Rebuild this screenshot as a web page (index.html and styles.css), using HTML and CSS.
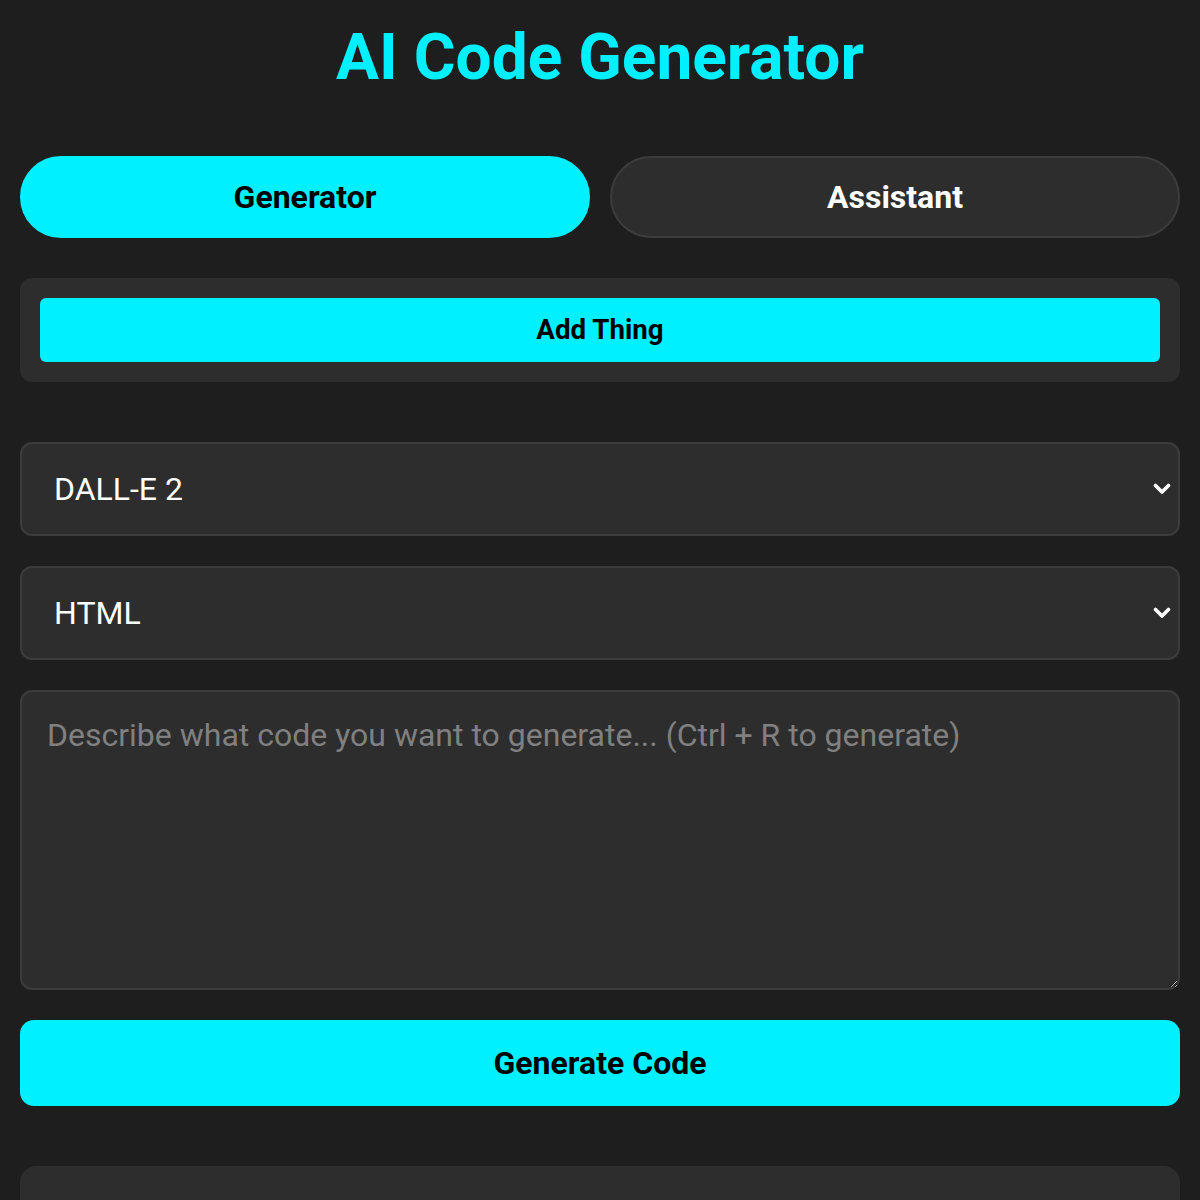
FILE: index.html
```html
<!DOCTYPE html>
<html lang="en">
<head>
<meta charset="utf-8">
<title>AI Code Generator</title>
<link rel="stylesheet" href="styles.css">
</head>
<body>
<main class="app">
  <h1 class="title">AI Code Generator</h1>
  <div class="tabs">
    <button class="tab tab-active">Generator</button>
    <button class="tab">Assistant</button>
  </div>
  <section class="panel things">
    <button class="add-btn">Add Thing</button>
  </section>
  <div class="select-wrap">
    <select class="select">
      <option>DALL-E 2</option>
    </select>
    <svg class="chevron" viewBox="0 0 18 12" width="18" height="12"><path d="M2.5 2.5 L9 9 L15.5 2.5" fill="none" stroke="#fff" stroke-width="3.6" stroke-linecap="round" stroke-linejoin="round"/></svg>
  </div>
  <div class="select-wrap">
    <select class="select">
      <option>HTML</option>
    </select>
    <svg class="chevron" viewBox="0 0 18 12" width="18" height="12"><path d="M2.5 2.5 L9 9 L15.5 2.5" fill="none" stroke="#fff" stroke-width="3.6" stroke-linecap="round" stroke-linejoin="round"/></svg>
  </div>
  <textarea class="prompt" placeholder="Describe what code you want to generate... (Ctrl + R to generate)"></textarea>
  <button class="generate">Generate Code</button>
  <section class="panel output"></section>
</main>
</body>
</html>
```

FILE: styles.css
```css
* { box-sizing: border-box; }
html, body { margin: 0; padding: 0; }
body {
  background: #1e1e1e;
  color: #fff;
  font-family: Roboto, "Noto Sans", sans-serif;
  color-scheme: dark;
}
.app {
  padding: 20px;
  display: flex;
  flex-direction: column;
}
.title {
  margin: 0 0 59px;
  font-size: 64px;
  line-height: 1.2;
  font-weight: 700;
  text-align: center;
  color: #00f0ff;
}
.tabs {
  display: flex;
  gap: 20px;
  margin-bottom: 40px;
}
.tab {
  flex: 1;
  height: 82px;
  border-radius: 41px;
  border: 2px solid #3c3c3c;
  background: #2d2d2d;
  color: #fff;
  font-family: Roboto, sans-serif;
  font-size: 32px;
  font-weight: 700;
  cursor: pointer;
}
.tab-active {
  background: #00f0ff;
  border-color: #00f0ff;
  color: #000;
}
.panel {
  background: #2d2d2d;
  border-radius: 12px;
}
.things {
  padding: 20px;
  margin-bottom: 60px;
}
.add-btn {
  width: 100%;
  height: 64px;
  border: none;
  border-radius: 6px;
  background: #00f0ff;
  color: #000;
  font-family: Roboto, sans-serif;
  font-size: 27.7px;
  font-weight: 700;
}
.select-wrap {
  position: relative;
  margin-bottom: 30px;
}
.select {
  appearance: none;
  -webkit-appearance: none;
  width: 100%;
  height: 94px;
  padding: 0 32px;
  background: #2d2d2d;
  border: 2px solid #3c3c3c;
  border-radius: 12px;
  color: #fff;
  font-family: Roboto, sans-serif;
  font-size: 32px;
}
.chevron {
  position: absolute;
  right: 9px;
  top: 41px;
  pointer-events: none;
}
.prompt {
  width: 100%;
  height: 300px;
  padding: 24px 25px;
  background: #2d2d2d;
  border: 2px solid #3c3c3c;
  border-radius: 12px;
  color: #fff;
  font-family: Roboto, sans-serif;
  font-size: 32px;
  line-height: 1.2;
  resize: vertical;
  margin-bottom: 30px;
  display: block;
}
.prompt::placeholder { color: #808080; }
.generate {
  width: 100%;
  height: 86px;
  border: none;
  border-radius: 14px;
  background: #00f0ff;
  color: #000;
  font-family: Roboto, sans-serif;
  font-size: 32px;
  font-weight: 700;
  margin-bottom: 60px;
}
.output {
  height: 200px;
  border-radius: 16px;
}
```
